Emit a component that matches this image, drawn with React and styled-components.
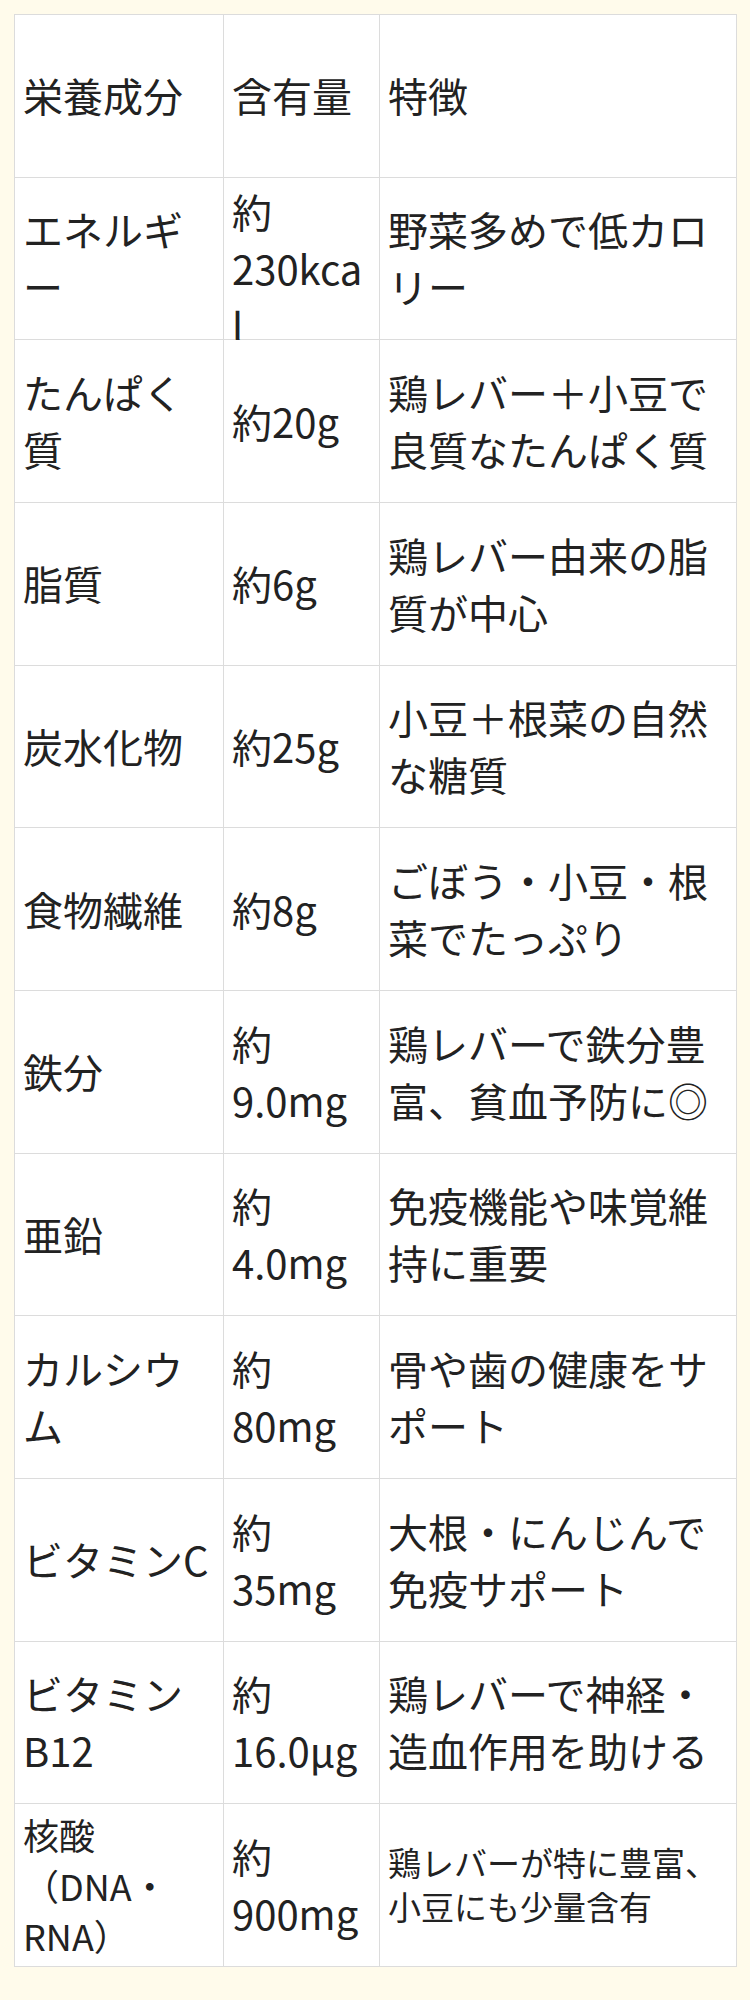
import React from "react";
import styled, { createGlobalStyle } from "styled-components";

const GlobalStyle = createGlobalStyle`
  html, body {
    margin: 0;
    padding: 0;
    background: #fffbeb;
  }
  body {
    font-family: "Noto Sans CJK JP", "Noto Sans", sans-serif;
    color: #222;
  }
`;

const Page = styled.div`
  padding: 14px 13px 14px 14px;
`;

const Table = styled.div`
  display: grid;
  grid-template-columns: 209px 156px 357px;
  grid-auto-rows: 162.67px;
  width: 723px;
  box-sizing: border-box;
  background: #fff;
  border-top: 1px solid #dcdcdc;
  border-left: 1px solid #dcdcdc;
`;

const Cell = styled.div`
  box-sizing: border-box;
  display: flex;
  align-items: safe center;
  padding: 5px 8px;
  border-right: 1px solid #dcdcdc;
  border-bottom: 1px solid #dcdcdc;
  background: #fff;
  font-size: ${(p) => p.$size || 40}px;
  line-height: ${(p) => p.$lh || 1.43};
  overflow-wrap: anywhere;
  min-width: 0;
`;

const CellText = styled.span`
  display: block;
  width: 100%;
`;

const rows = [
  ["栄養成分", "含有量", "特徴"],
  ["エネルギー", "約230kcal", "野菜多めで低カロリー"],
  ["たんぱく質", "約20g", "鶏レバー＋小豆で良質なたんぱく質"],
  ["脂質", "約6g", "鶏レバー由来の脂質が中心"],
  ["炭水化物", "約25g", "小豆＋根菜の自然な糖質"],
  ["食物繊維", "約8g", "ごぼう・小豆・根菜でたっぷり"],
  ["鉄分", "約9.0mg", "鶏レバーで鉄分豊富、貧血予防に◎"],
  ["亜鉛", "約4.0mg", "免疫機能や味覚維持に重要"],
  ["カルシウム", "約80mg", "骨や歯の健康をサポート"],
  ["ビタミンC", "約35mg", "大根・にんじんで免疫サポート"],
  ["ビタミンB12", "約16.0µg", "鶏レバーで神経・造血作用を助ける"],
];

export default function App() {
  return (
    <>
      <GlobalStyle />
      <Page>
        <Table>
          {rows.map((r, i) => (
            <React.Fragment key={i}>
              <Cell><CellText>{r[0]}</CellText></Cell>
              <Cell><CellText>{r[1]}</CellText></Cell>
              <Cell><CellText>{r[2]}</CellText></Cell>
            </React.Fragment>
          ))}
          <Cell $size={36} $lh={1.4}><CellText>核酸（DNA・RNA）</CellText></Cell>
          <Cell><CellText>約900mg</CellText></Cell>
          <Cell $size={33} $lh={1.33}><CellText>鶏レバーが特に豊富、小豆にも少量含有</CellText></Cell>
        </Table>
      </Page>
    </>
  );
}
